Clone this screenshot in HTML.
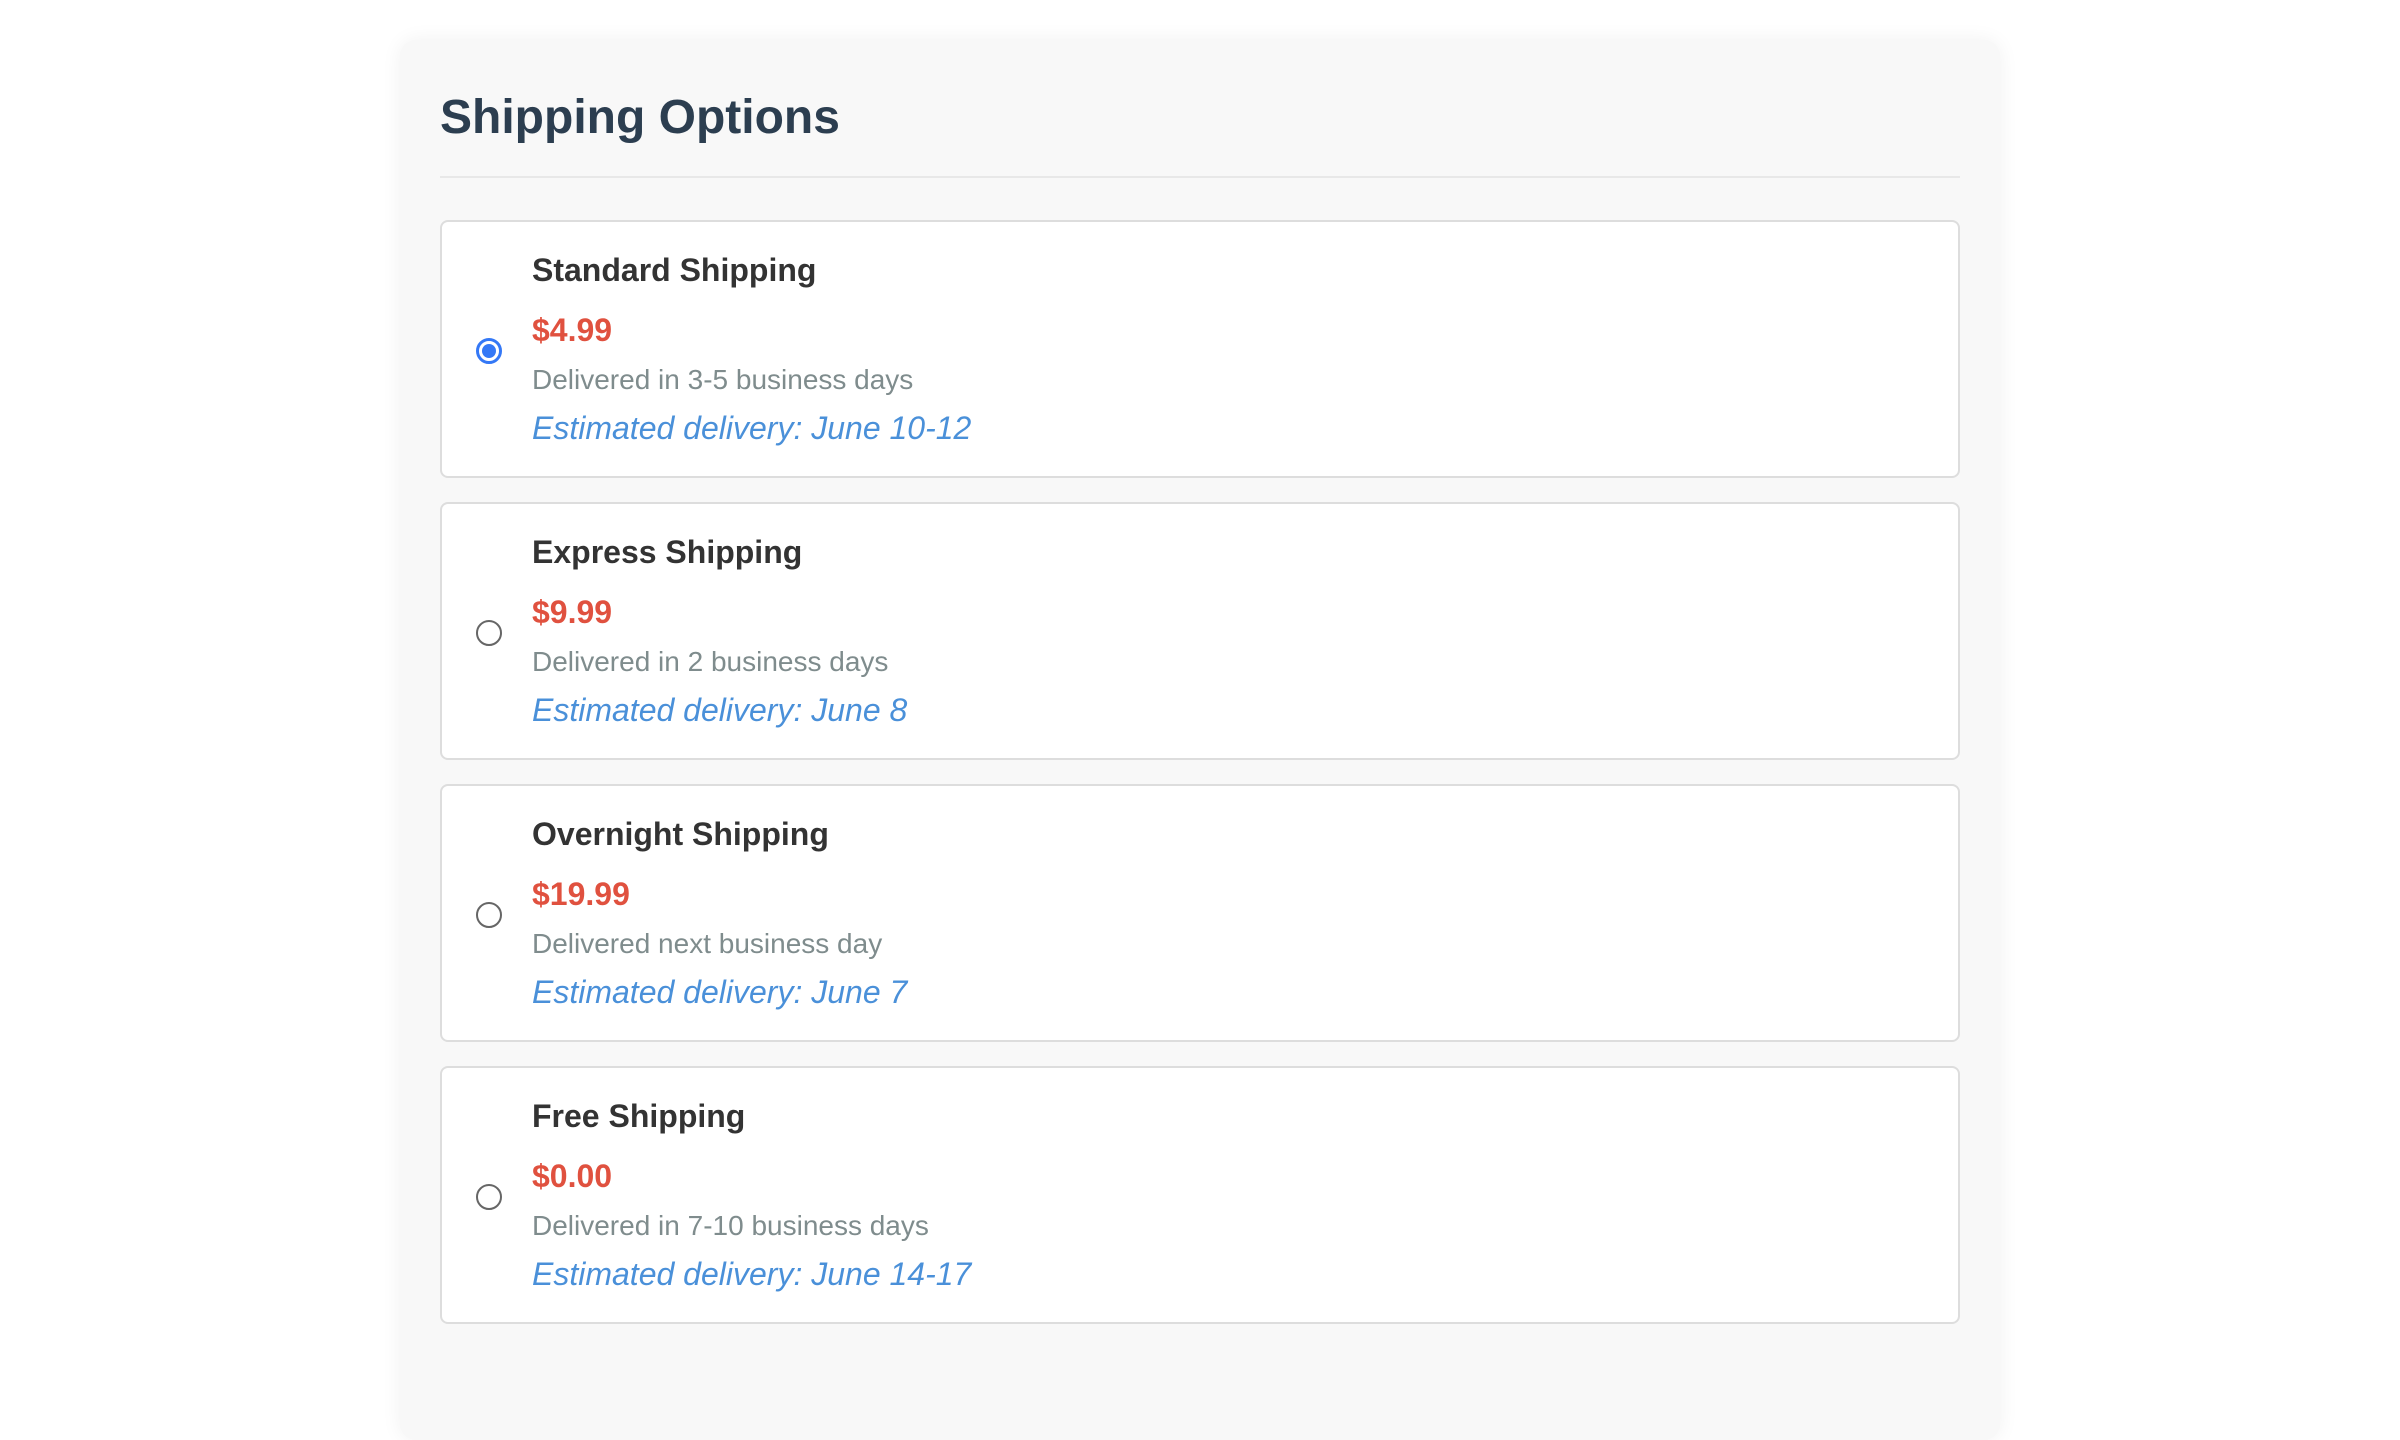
<!DOCTYPE html>
<html><head><meta charset="utf-8"><style>
html,body{margin:0;padding:0;background:#fff;}
body{zoom:2;width:1200px;height:692px;overflow:hidden;font-family:"Liberation Sans",Arial,sans-serif;}
.wrap{position:absolute;left:200px;top:20px;width:760px;height:700px;padding:0 20px;background:#f8f8f8;border-radius:8px;box-shadow:0 0 10px rgba(0,0,0,0.06);}
h2{margin:0;position:absolute;top:0;left:20px;width:760px;height:69px;border-bottom:1px solid #e8e8e8;font-size:24px;line-height:24px;padding-top:27px;box-sizing:border-box;color:#2c3e50;font-weight:bold;}
.list{position:absolute;top:90px;left:20px;width:760px;}
.card{box-sizing:border-box;height:129px;margin-bottom:12px;background:#fff;border:1px solid #ddd;border-radius:4px;padding:14px 20px 15px 0;position:relative;}
.radio{position:absolute;left:17px;top:58px;width:13px;height:13px;box-sizing:border-box;border:1px solid #666;border-radius:50%;background:#fff;}
.radio.on{border:1.5px solid #3478f6;}
.radio.on:after{content:"";position:absolute;left:1.5px;top:1.5px;width:7px;height:7px;border-radius:50%;background:#3478f6;}
.txt{margin-left:45px;}
.t{font-size:16px;line-height:20px;font-weight:bold;color:#333;margin-bottom:10px;}
.p{font-size:16px;line-height:20px;font-weight:bold;color:#e0513f;margin-bottom:5px;}
.d{font-size:14px;line-height:20px;color:#7f8c8d;margin-bottom:4px;}
.e{font-size:16px;line-height:20px;font-style:italic;color:#4a90d9;}
</style></head><body>
<div class="wrap">
<h2>Shipping Options</h2>
<div class="list">
<div class="card"><div class="radio on"></div><div class="txt"><div class="t">Standard Shipping</div><div class="p">$4.99</div><div class="d">Delivered in 3-5 business days</div><div class="e">Estimated delivery: June 10-12</div></div></div>
<div class="card"><div class="radio"></div><div class="txt"><div class="t">Express Shipping</div><div class="p">$9.99</div><div class="d">Delivered in 2 business days</div><div class="e">Estimated delivery: June 8</div></div></div>
<div class="card"><div class="radio"></div><div class="txt"><div class="t">Overnight Shipping</div><div class="p">$19.99</div><div class="d">Delivered next business day</div><div class="e">Estimated delivery: June 7</div></div></div>
<div class="card"><div class="radio"></div><div class="txt"><div class="t">Free Shipping</div><div class="p">$0.00</div><div class="d">Delivered in 7-10 business days</div><div class="e">Estimated delivery: June 14-17</div></div></div>
</div>
</div>
</body></html>
